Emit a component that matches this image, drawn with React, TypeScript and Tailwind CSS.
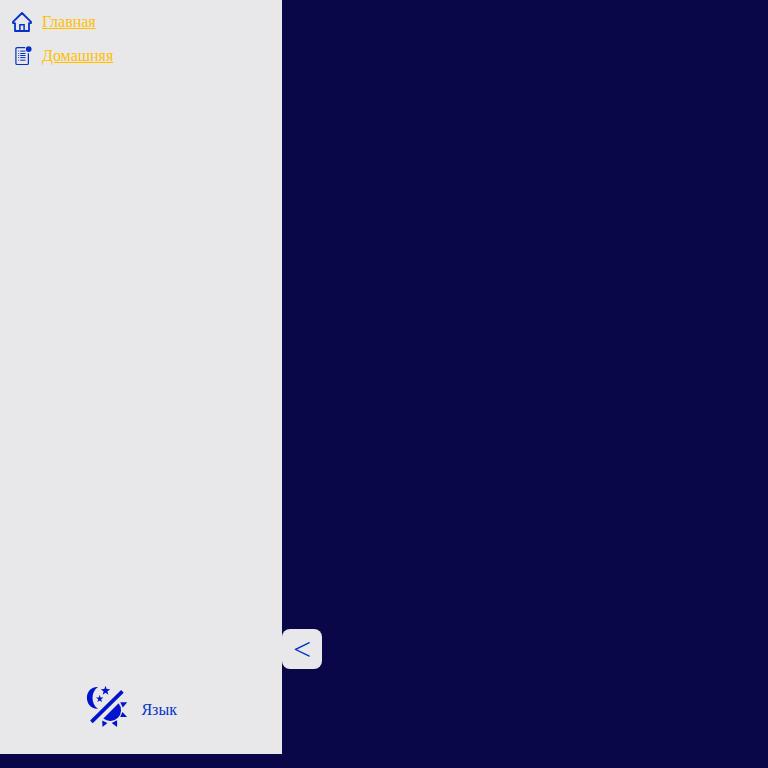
function HomeIcon() {
  return (
    <svg className="size-5 shrink-0" viewBox="0 0 20 20" fill="none" stroke="#0432c8" strokeWidth="1.8">
      <path d="M1 11.1V9.9L10 1l9 8.9v1.2h-2V19H3v-7.9z" strokeLinejoin="round" />
      <path d="M7.9 19v-6.3h4.2V19" strokeWidth="1.5" />
    </svg>
  );
}

function DocIcon() {
  return (
    <svg className="size-5 shrink-0" viewBox="0 0 20 20" fill="none" stroke="#0432c8">
      <path d="M13.2 1.6H5.1Q3.9 1.6 3.9 2.8v14.4q0 1.3 1.2 1.3h10.1q1.2 0 1.2-1.3V7.3" strokeWidth="1.2" />
      <circle cx="16.7" cy="3.1" r="2.9" fill="#0432c8" stroke="none" />
      <path d="M8.2 5.1h5.3M8.2 7.5h5.3M8.2 9.5h5.3M8.2 11.6h5.3M8.2 14.2h5.3" strokeWidth="1" />
      <path d="M6.1 5.1h1.1M6.1 7.5h1.1M6.1 9.5h1.1M6.1 11.6h1.1M6.1 14.2h1.1" strokeWidth="0.8" />
    </svg>
  );
}

function ThemeIcon() {
  return (
    <svg className="size-[42px] shrink-0" viewBox="6 6 42 42" fill="#0313cc">
      <path d="M18 7C10.8 6.6 6.9 12 6.9 17.8S10.8 29.2 18 28.8C10.7 24 10.7 11.8 18 7z" />
      <path d="M25.5 5.8l1.2 3.3 3.5.1-2.8 2.2 1 3.4-2.9-2-2.9 2 1-3.4-2.8-2.2 3.5-.1z" />
      <path d="M19.7 14.8l.9 2.7 2.9.1-2.3 1.7.8 2.7-2.3-1.6-2.3 1.6.8-2.7-2.3-1.7 2.9-.1z" />
      <path d="M10.1 40.6L41.1 10.1l2.6 2.7L12.7 43.3z" />
      <path d="M38.6 23.3A10.8 10.8 0 0 1 23.4 38.5z" />
      <path d="M40.2 22.2h7l-4.4 5.2zM42.4 32l4.7 5h-6.9zM22.2 40.4l5.2 2.5-4.9 4.2zM31.7 42.9l5.4-2.6v6.7z" />
    </svg>
  );
}

export default function App() {
  return (
    <div className="flex h-screen items-start overflow-hidden bg-[#090748] font-['Liberation_Serif',serif] text-base text-[#0432c8]">
      <aside className="flex h-[754px] w-[282px] shrink-0 flex-col justify-between bg-[#e8e8ea]">
        <nav className="flex flex-col gap-3.5 px-3 pt-3 text-[#ffbf00]">
          <a href="#main" className="flex h-5 items-center gap-2.5">
            <HomeIcon />
            <span className="leading-5 underline">Главная</span>
          </a>
          <a href="#home" className="flex h-5 items-center gap-2.5">
            <DocIcon />
            <span className="leading-5 underline">Домашняя</span>
          </a>
        </nav>
        <div className="flex items-center gap-[13.4px] pb-[26px] pl-[86px]">
          <ThemeIcon />
          <span className="pt-1.5 leading-5">Язык</span>
        </div>
      </aside>
      <button className="mt-[629px] flex size-10 items-center justify-center rounded-lg bg-[#e8e8ea] text-[32px] leading-10">
        &lt;
      </button>
    </div>
  );
}
